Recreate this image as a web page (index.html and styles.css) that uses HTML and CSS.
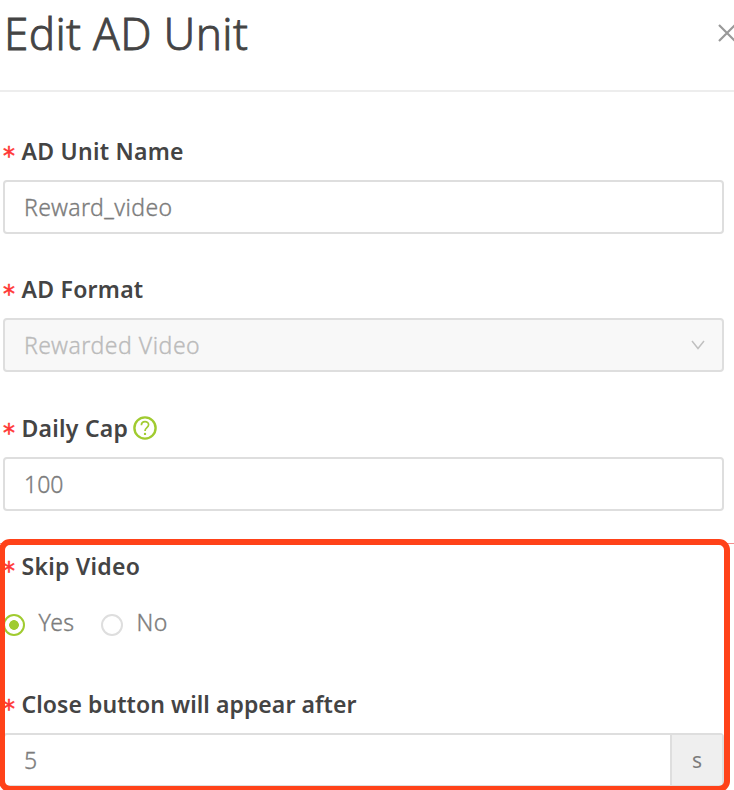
FILE: index.html
```html
<!DOCTYPE html>
<html lang="en">
<head>
<meta charset="utf-8">
<title>Edit AD Unit</title>
<link rel="stylesheet" href="styles.css">
</head>
<body>
<main class="dialog">
  <header class="header">
    <h1 class="title">Edit AD Unit</h1>
    <svg class="close" viewBox="0 0 18 18"><path d="M1 1l16 16M17 1L1 17"/></svg>
  </header>
  <form class="form">
    <div class="group">
      <div class="label"><span class="star">*</span><span class="name">AD Unit Name</span></div>
      <div class="field"><span class="value">Reward_video</span></div>
    </div>
    <div class="group">
      <div class="label"><span class="star">*</span><span class="name">AD Format</span></div>
      <div class="field disabled"><span class="value wide">Rewarded Video</span>
        <svg class="chevron" viewBox="0 0 14 10"><path d="M1 1l6 7.5L13 1"/></svg>
      </div>
    </div>
    <div class="group">
      <div class="label"><span class="star">*</span><span class="name">Daily Cap</span>
        <svg class="help" viewBox="0 0 24 24"><circle cx="12" cy="12" r="10.6"/><path class="hook" d="M8.4 9.3C8.4 4.4 15.6 4.5 15.6 8.8C15.6 11.8 12 11.6 12 15"/><circle class="dot" cx="12" cy="17.9" r="1.2"/></svg>
      </div>
      <div class="field"><span>100</span></div>
    </div>
    <div class="group">
      <div class="label"><span class="star">*</span><span class="name">Skip Video</span></div>
      <div class="radios">
        <span class="radio checked"></span><span class="choice yes">Yes</span>
        <span class="radio"></span><span class="choice">No</span>
      </div>
    </div>
    <div class="group">
      <div class="label"><span class="star">*</span><span class="name long">Close button will appear after</span></div>
      <div class="field with-unit"><span>5</span><span class="unit">s</span></div>
    </div>
  </form>
  <div class="guide"></div>
  <div class="highlight"></div>
</main>
</body>
</html>
```
FILE: styles.css
```css
* { box-sizing: border-box; }
body {
  margin: 0;
  background: #fff;
  font-family: "Noto Sans", "Open Sans", sans-serif;
  font-size: 23px;
  color: #7c7c7c;
}
.dialog { position: relative; width: 734px; height: 790px; overflow: hidden; }
.header {
  display: flex;
  height: 92px;
  padding-left: 4px;
  justify-content: space-between;
  border-bottom: 2px solid #ededed;
}
.title {
  margin: 2px 0 0;
  font-size: 44px;
  line-height: 62px;
  font-weight: 300;
  letter-spacing: 0.35px;
  color: #444;
  -webkit-text-stroke: 0.8px #444;
  white-space: nowrap;
}
.close { width: 18px; height: 18px; margin: 24px -2px 0 0; flex: none; }
.close path { fill: none; stroke: #999; stroke-width: 2.2; }
.form { padding: 43px 10px 0 3px; }
.group { height: 138.3px; }
.label { display: flex; align-items: center; height: 32px; margin-bottom: 13px; white-space: nowrap; }
.star {
  width: 18.5px;
  padding-top: 10px;
  font-family: "DejaVu Sans", sans-serif;
  font-size: 24px;
  line-height: 24px;
  color: #ff3434;
  -webkit-text-stroke: 0.5px #ff3434;
}
.name { font-weight: 600; color: #444; line-height: 32px; letter-spacing: 0.25px; }
.long { letter-spacing: 0.06px; }
.help { width: 24px; height: 24px; margin-left: 5px; }
.help circle, .help path { fill: none; stroke: #a0cb30; stroke-width: 2.4; }
.help .hook { stroke-width: 1.7; }
.help .dot { fill: #a0cb30; stroke: none; }
.field {
  display: flex;
  align-items: center;
  height: 54px;
  padding-left: 19px;
  border: 2px solid #dedede;
  border-radius: 4px;
  font-weight: 300;
}
.field, .radios { -webkit-text-stroke: 0.35px currentColor; }
.value { letter-spacing: 0.42px; }
.wide { letter-spacing: 0.52px; }
.disabled { background: #f8f8f8; color: #bbb; justify-content: space-between; }
.chevron { width: 14px; height: 10px; margin-right: 17px; }
.chevron path { fill: none; stroke: #c0c0c0; stroke-width: 1.5; }
.with-unit { justify-content: space-between; }
.unit {
  display: flex;
  align-items: center;
  justify-content: center;
  width: 52px;
  height: 50px;
  border-left: 2px solid #dedede;
  background: #efefef;
  font-size: 21px;
  font-weight: 400;
  -webkit-text-stroke: 0;
}
.radios { display: flex; align-items: center; height: 32px; padding-top: 23px; font-weight: 300; letter-spacing: 0.5px; }
.radio { flex: none; width: 22px; height: 22px; border: 2px solid #dedede; border-radius: 50%; margin-top: 5px; }
.checked { border-color: #a0cb30; background: radial-gradient(circle, #a0cb30 4.5px, transparent 5.2px); }
.choice { padding-left: 13.5px; }
.yes { width: 76px; }
.guide { position: absolute; top: 543px; left: 0; width: 734px; height: 1px; background: #f58b8b; }
.highlight {
  position: absolute;
  top: 539px;
  left: -1px;
  width: 731px;
  height: 253px;
  border: 6px solid #ff4219;
  border-radius: 11px;
}
```
